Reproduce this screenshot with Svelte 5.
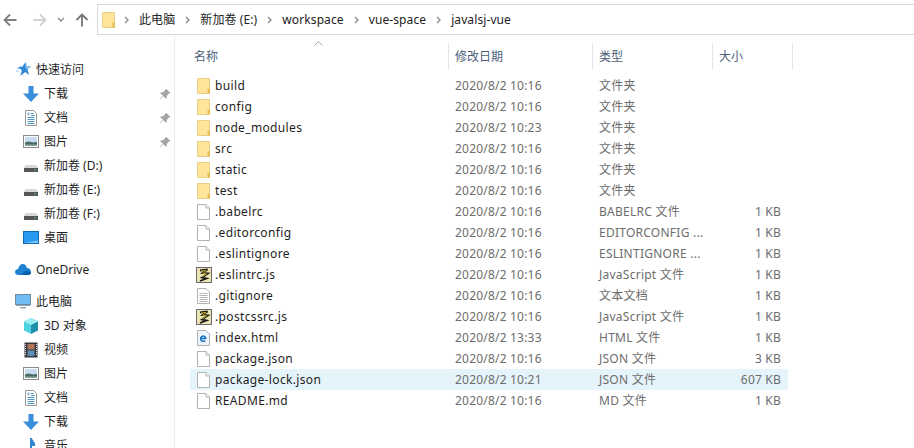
<script>
  const nav = [
    { label: '快速访问', icon: 'star', top: true },
    { label: '下载', icon: 'down', pin: true },
    { label: '文档', icon: 'doc', pin: true },
    { label: '图片', icon: 'pic', pin: true },
    { label: '新加卷 (D:)', icon: 'drive' },
    { label: '新加卷 (E:)', icon: 'drive' },
    { label: '新加卷 (F:)', icon: 'drive' },
    { label: '桌面', icon: 'desk' },
    { label: 'OneDrive', icon: 'cloud', top: true, gap: true },
    { label: '此电脑', icon: 'pc', top: true, gap: true },
    { label: '3D 对象', icon: 'cube' },
    { label: '视频', icon: 'film' },
    { label: '图片', icon: 'pic' },
    { label: '文档', icon: 'doc' },
    { label: '下载', icon: 'down' },
    { label: '音乐', icon: 'note' }
  ];
  const F = '文件夹';
  const files = [
    ['build', '2020/8/2 10:16', F, '', 'folder'],
    ['config', '2020/8/2 10:16', F, '', 'folder'],
    ['node_modules', '2020/8/2 10:23', F, '', 'folder'],
    ['src', '2020/8/2 10:16', F, '', 'folder'],
    ['static', '2020/8/2 10:16', F, '', 'folder'],
    ['test', '2020/8/2 10:16', F, '', 'folder'],
    ['.babelrc', '2020/8/2 10:16', 'BABELRC 文件', '1 KB', 'file'],
    ['.editorconfig', '2020/8/2 10:16', 'EDITORCONFIG ...', '1 KB', 'file'],
    ['.eslintignore', '2020/8/2 10:16', 'ESLINTIGNORE ...', '1 KB', 'file'],
    ['.eslintrc.js', '2020/8/2 10:16', 'JavaScript 文件', '1 KB', 'js'],
    ['.gitignore', '2020/8/2 10:16', '文本文档', '1 KB', 'txt'],
    ['.postcssrc.js', '2020/8/2 10:16', 'JavaScript 文件', '1 KB', 'js'],
    ['index.html', '2020/8/2 13:33', 'HTML 文件', '1 KB', 'html'],
    ['package.json', '2020/8/2 10:16', 'JSON 文件', '3 KB', 'file'],
    ['package-lock.json', '2020/8/2 10:21', 'JSON 文件', '607 KB', 'file', true],
    ['README.md', '2020/8/2 10:16', 'MD 文件', '1 KB', 'file']
  ];
  const crumbs = ['此电脑', '新加卷 (E:)', 'workspace', 'vue-space', 'javalsj-vue'];
</script>

{#snippet icon(name)}
  <svg class="ico" width="16" height="16" viewBox="0 0 16 16">
    {#if name === 'folder'}
      <path d="M1.500.5h12v15h-12z" fill="#fee59a" stroke="#e9cf8a"/>
      <path d="M11.500 10.500h2.500v5h-2.500z" fill="#e9bd55"/>
    {:else if name === 'file'}
      <path d="M1.500.5h8.500l3.500 3.500v11.500h-12z" fill="#fff" stroke="#b2b2b2"/>
      <path d="M10 .5v3.500h3.500" fill="#f4f4f4" stroke="#b2b2b2"/>
    {:else if name === 'txt'}
      <path d="M1.500.5h8.500l3.500 3.500v11.500h-12z" fill="#fff" stroke="#b2b2b2"/>
      <path d="M3.500 5.500h8M3.500 7.500h8M3.500 9.500h8M3.500 11.500h8M3.500 13.500h8" stroke="#b5b5b5"/>
    {:else if name === 'js'}
      <rect x=".5" y=".5" width="15" height="15" fill="#ece6b4" stroke="#6a6a6a"/>
      <path d="M4 3.500l7.500-1L6.500 6l5.500.5L6 10.500l4.500 1-6.500 2.500" fill="none" stroke="#1b1b1b" stroke-width="1.800"/>
      <path d="M5 4l5-.7-3 3 3.500.5-4 3" fill="none" stroke="#dcc22a" stroke-width=".8"/>
    {:else if name === 'html'}
      <path d="M1.500.5h8.500l3.500 3.500v11.500h-12z" fill="#eef6fc" stroke="#b2b2b2"/>
      <path d="M4.600 8.500h5.200A2.600 2.600 0 1 0 9 10.600" fill="none" stroke="#1673c4" stroke-width="1.500"/>
    {:else if name === 'star'}
      <path d="M10.500 0l1.300 4.500 4.200.1-3.400 3 1.400 5.400-3.900-3L5.500 14l1.300-5.800L3 5l4.500-.4z" fill="#2f86d4"/>
      <path d="M10.500 0l1.300 4.500 4.200.1-3.400 3-2.100-1.700z" fill="#8cc6f2"/>
      <path d="M2 6.500h3M1 9h3" stroke="#8cc6f2"/>
    {:else if name === 'down'}
      <path d="M5.500 0h5v7.500H16L8 16 0 7.500h5.500z" fill="#3a8fdc"/>
    {:else if name === 'doc'}
      <path d="M2.500.5h8l3 3v12h-11z" fill="#fff" stroke="#9a9a9a"/>
      <path d="M7.500 3.500h3M8 5.500h3.500M4.500 7.500h7M4.500 9.500h7M4.500 11.500h7M4.500 13.500h7" stroke="#4f96c9"/>
      <path d="M4.500 2.500h2v3h-2z" fill="#8eb6d0"/>
    {:else if name === 'pic'}
      <rect x=".5" y="1.500" width="15" height="12" fill="#fff" stroke="#8b8b8b"/>
      <rect x="2" y="3" width="12" height="9" fill="#c6dcee"/>
      <path d="M2 8.500l4-1 4 1 4-.5v4H2z" fill="#476b63"/>
      <path d="M2 10.500h12V12H2z" fill="#8aa5a0"/>
    {:else if name === 'drive'}
      <path d="M2.500 7h11l1.500 3H1z" fill="#d9d9d9"/>
      <path d="M1 10h14v4H1z" fill="#54575a"/>
      <path d="M11 11.500h2v1h-2z" fill="#5fd06f"/>
    {:else if name === 'desk'}
      <rect x=".5" y="1.500" width="15" height="12" fill="#2a9af0" stroke="#0e6bb2"/>
      <path d="M1 13l14-2.500V13z" fill="#7cc6f8"/>
    {:else if name === 'cloud'}
      <path d="M3.500 13C1.500 13 0 11.700 0 10C0 8.300 1.400 7.100 3 7.200 3.800 4 5.500 2 7.800 2c2 0 3.500 1.300 4.100 4C14.400 6 16 8 16 10 16 11.800 14.800 13 13 13z" fill="#1f7fd0"/>
      <path d="M6 13l5-4.500 5 1.700c0 1.600-1.200 2.800-3 2.800z" fill="#0b5fae"/>
    {:else if name === 'pc'}
      <rect x=".5" y=".5" width="15" height="10" fill="#6fbdf2" stroke="#6d8aa0"/>
      <path d="M1 11h14v1H1z" fill="#8da3b4"/>
      <path d="M5 13h6v1.500H5z" fill="#9aa7b2"/>
    {:else if name === 'cube'}
      <path d="M8 0l7 3.500v9L8 16z" fill="#1f8ea8"/>
      <path d="M8 0L1 3.500v9L8 16z" fill="#4fd0e0"/>
      <path d="M8 0l7 3.500L8 7 1 3.500z" fill="#9af0f5"/>
    {:else if name === 'film'}
      <rect x="1.500" y=".5" width="13" height="15" fill="#34393f"/>
      <rect x="4.500" y="2" width="7" height="5.500" fill="#b2785a"/>
      <rect x="4.500" y="8.500" width="7" height="5.500" fill="#5c8fb8"/>
      <path d="M2.500 2v12M13.500 2v12" stroke="#ddd" stroke-dasharray="1 1"/>
    {:else if name === 'note'}
      <path d="M7 0h2c.5 3 4 4 3 8H9v5.500C9 15 7.500 16 6 16s-2.500-1-2.500-2.300S5 11.500 7 11.500z" fill="#2f86d4"/>
    {/if}
  </svg>
{/snippet}

<div class="window">
  <header class="toolbar">
    <div class="buttons">
      <svg width="14" height="14" viewBox="0 0 14 14" class="back"><path d="M7 1.500L1.500 7 7 12.500M2 7h11.500" fill="none" stroke="#808080" stroke-width="1.800"/></svg>
      <svg width="14" height="14" viewBox="0 0 14 14" class="fwd"><path d="M7 1.500L12.500 7 7 12.500M12 7H.5" fill="none" stroke="#d2d2d2" stroke-width="1.800"/></svg>
      <svg width="8" height="6" viewBox="0 0 8 6" class="drop"><path d="M1 1l3 3 3-3" fill="none" stroke="#8a8a8a" stroke-width="1.400"/></svg>
      <svg width="14" height="14" viewBox="0 0 14 14" class="up"><path d="M1.500 7L7 1.500 12.500 7M7 2v11.500" fill="none" stroke="#757575" stroke-width="1.800"/></svg>
    </div>
    <div class="address">
      <span class="addr-folder">{@render icon('folder')}</span>
      {#each crumbs as c}
        <svg class="chev" width="5" height="8" viewBox="0 0 5 8"><path d="M1 1l3 3-3 3" fill="none" stroke="#8a8a8a" stroke-width="1.300"/></svg>
        <span class="crumb">{c}</span>
      {/each}
    </div>
  </header>

  <div class="body">
    <aside class="sidebar">
      {#each nav as n}
        <div class="nav-item" class:top={n.top} class:gap={n.gap}>
          {@render icon(n.icon)}
          <span class="nav-label">{n.label}</span>
          {#if n.pin}
            <svg class="pin" width="12" height="12" viewBox="0 0 12 12"><path d="M7 1l4 4-1.500.5L7.500 8 7 10.500 1.500 5 4 4.500 6.500 2.500zM4 8l-3 3" fill="#a5a5a5" stroke="#a5a5a5" stroke-width=".7"/></svg>
          {/if}
        </div>
      {/each}
    </aside>

    <main class="list">
      <svg class="sort" width="9" height="5" viewBox="0 0 9 5"><path d="M.5 4.500l4-4 4 4" fill="none" stroke="#a8a8a8"/></svg>
      <div class="head">
        <div class="hcell name">名称</div>
        <div class="hcell date">修改日期</div>
        <div class="hcell type">类型</div>
        <div class="hcell size">大小</div>
      </div>
      <div class="rows">
        {#each files as f}
          <div class="row" class:sel={f[5]}>
            <div class="cell name">{@render icon(f[4])}<span class="fname">{f[0]}</span></div>
            <div class="cell date">{f[1]}</div>
            <div class="cell type">{f[2]}</div>
            <div class="cell size">{f[3]}</div>
          </div>
        {/each}
      </div>
    </main>
  </div>
</div>

<style>
  :global(body) { background: #fff; overflow: hidden; }
  .window {
    width: 914px; height: 448px; overflow: hidden; background: #fff;
    font: 12px/16px "Noto Sans", "Noto Sans CJK SC", sans-serif; color: #1e1e1e;
    display: flex; flex-direction: column;
  }
  .toolbar { display: flex; height: 35px; padding-top: 4px; box-sizing: border-box; flex: none; }
  .buttons { width: 97px; flex: none; display: flex; align-items: center; }
  .back { margin-left: 3px; }
  .fwd { margin-left: 16px; }
  .drop { margin-left: 10px; }
  .up { margin-left: 10px; }
  .address {
    flex: 1; display: flex; align-items: center; border: 1px solid #d9d9d9; border-right: 0;
    padding-left: 3px; box-sizing: border-box;
  }
  .addr-folder { width: 23px; display: flex; }
  .chev { margin-right: 10px; flex: none; }
  .crumb { margin-right: 10px; color: #222; letter-spacing: .1px; }
  .body { flex: 1; display: flex; min-height: 0; }
  .sidebar {
    width: 175px; box-sizing: border-box; border-right: 1px solid #eeeeee; padding-top: 23px; flex: none;
  }
  .nav-item { height: 24px; display: flex; align-items: center; padding-left: 23px; position: relative; }
  .nav-item.top { padding-left: 15px; }
  .nav-item.gap { margin-top: 8px; }
  .nav-label { margin-left: 5px; }
  .pin { position: absolute; left: 159px; top: 6px; }
  .list { position: relative; flex: 1; padding-left: 15px; }
  .sort { position: absolute; left: 139px; top: 6px; }
  .head { display: flex; height: 27px; margin-top: 8px; color: #4c607a; }
  .hcell { box-sizing: border-box; display: flex; align-items: center; padding-left: 6px; border-right: 1px solid #e5e5e5; flex: none; }
  .hcell.name { padding-left: 4px; }
  .name { width: 259px; }
  .date { width: 144px; }
  .type { width: 120px; }
  .size { width: 80px; }
  .rows { margin-top: 5px; }
  .row { display: flex; height: 21px; align-items: center; width: 598px; color: #6d6d6d; }
  .row.sel { background: #e5f3fb; }
  .cell { box-sizing: border-box; padding-left: 6px; white-space: nowrap; flex: none; }
  .cell.name { display: flex; align-items: center; }
  .cell.date { letter-spacing: .2px; }
  .cell.type { letter-spacing: .25px; }
  .cell.size { text-align: right; padding-right: 12px; letter-spacing: .2px; }
  .fname { margin-left: 3px; color: #1e1e1e; letter-spacing: .35px; }
  .ico { flex: none; display: block; }
</style>
